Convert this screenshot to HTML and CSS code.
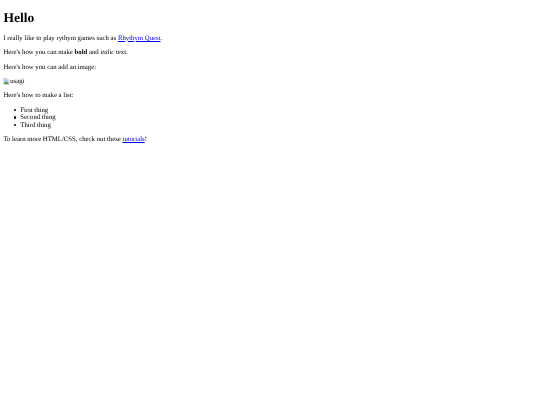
FILE: index.html
```html
<!DOCTYPE html>
<html lang="en">
<head>
  <meta charset="UTF-8">
  <title>Hello</title>
  <link rel="stylesheet" href="styles.css">
</head>
<body>
  <h1>Hello</h1>
  <p>I really like to play rythym games such as <a href="#">Rhythym Quest</a>.</p>
  <p>Here's how you can make <b>bold</b> and <i>italic</i> text.</p>
  <p>Here's how you can add an image:</p>
  <p class="broken-image">
    <!-- stand-in for the missing picture -->
    <svg class="broken-icon" viewBox="0 0 16 16" aria-hidden="true">
      <path d="M1.5 1.5h9l4 4v9h-13z" fill="#fff" stroke="#808080"/>
      <path d="M3 3h7v3h3v7H3z" fill="#a9c4ee"/>
      <path d="M2 14l5-6 3 3 2-1 1 4z" fill="#3f8f35"/>
    </svg><span>usagi</span>
  </p>
  <p>Here's how to make a list:</p>
  <ul>
    <li>First thing</li>
    <li>Second thing</li>
    <li>Third thing</li>
  </ul>
  <p>To learn more HTML/CSS, check out these <a href="#">tutorials</a>!</p>
</body>
</html>
```

FILE: styles.css
```css
/* Default browser page, at about 42% of its normal size */
body {
  margin: 3.4px;
  background-color: #fff;
  color: #000;
  font-family: "Liberation Serif", serif;
  font-size: 6.75px;
  line-height: 7.6px;
  text-rendering: geometricPrecision;
  filter: blur(0.3px);
}

h1 {
  margin: 7px 0 9px;
  font-size: 13.5px;
  line-height: 15.5px;
  font-weight: bold;
}

p {
  margin: 6.75px 0;
}

a {
  color: #0000ee;
}

ul {
  margin: 6.75px 0;
  padding-left: 16.9px;
  list-style: none;
}

li::before {
  content: "";
  display: inline-block;
  width: 2.4px;
  height: 2.4px;
  margin-left: -6.2px;
  margin-right: 3.8px;
  border-radius: 50%;
  background-color: #000;
  vertical-align: middle;
}

.broken-image {
  display: flex;
  align-items: center;
}

.broken-icon {
  width: 6.75px;
  height: 6.75px;
}
```
